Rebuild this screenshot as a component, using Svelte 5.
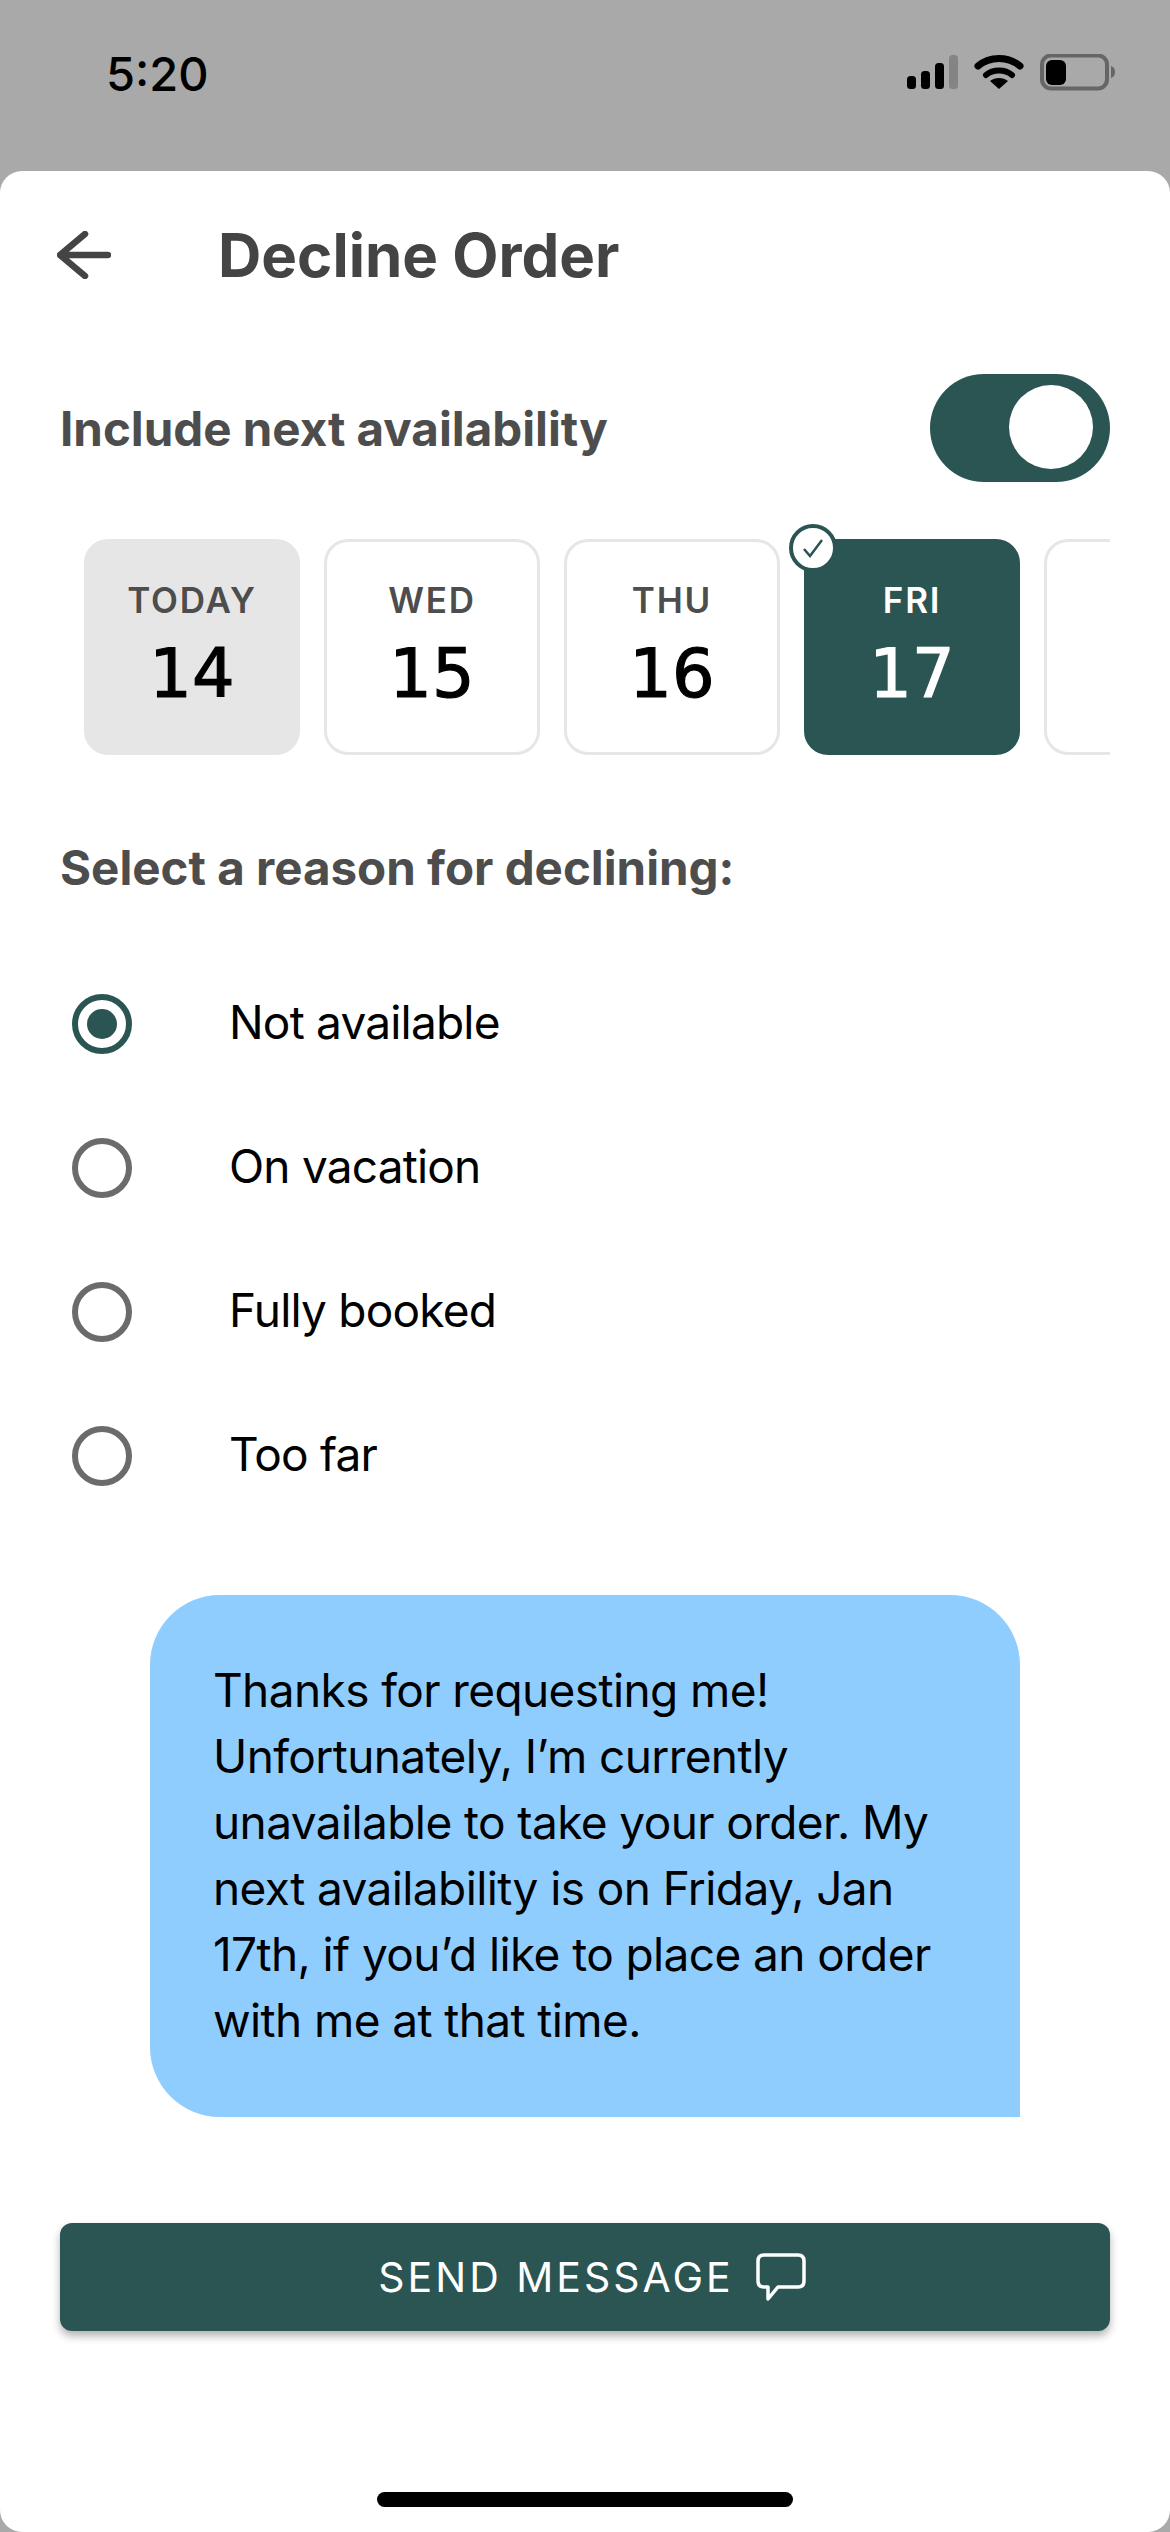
<script>
  const days = [
    { label: "TODAY", num: "14", kind: "today" },
    { label: "WED", num: "15", kind: "" },
    { label: "THU", num: "16", kind: "" },
    { label: "FRI", num: "17", kind: "picked" },
    // only the left edge of this card shows, its text is scrolled out of view
    { label: "", num: "", kind: "" }
  ];
  const reasons = ["Not available", "On vacation", "Fully booked", "Too far"];
  let selected = 0;
</script>

<div class="screen">
  <div class="status">
    <span class="time">5:20</span>
    <svg class="status-icons" width="208" height="38" viewBox="0 0 208 38">
      <!-- signal -->
      <rect x="0" y="22" width="9" height="13" rx="3.5" fill="#000" />
      <rect x="14" y="17" width="9" height="18" rx="3.5" fill="#000" />
      <rect x="28" y="9" width="9" height="26" rx="3.5" fill="#000" />
      <rect x="42" y="1" width="9" height="34" rx="3.5" fill="#848484" />
      <!-- wifi -->
      <path d="M71 12 C83 2 101 2 113 12" fill="none" stroke="#000" stroke-width="7" stroke-linecap="round" />
      <path d="M79 21 C86 15 98 15 105 21" fill="none" stroke="#000" stroke-width="6" stroke-linecap="round" />
      <path d="M92 35 L83 27 C88 23 96 23 101 27 Z" fill="#000" />
      <!-- battery -->
      <rect x="135" y="1.500" width="65" height="33" rx="9" fill="none" stroke="#666" stroke-width="4" />
      <rect x="139" y="6" width="20" height="25" rx="6" fill="#000" />
      <path d="M204 12 C207 13 208 15 208 18 C208 21 207 23 204 24 Z" fill="#666" />
    </svg>
  </div>

  <div class="sheet">
    <header class="top">
      <svg class="back" width="54" height="48" viewBox="0 0 54 48">
        <path d="M51 24 H4 M28 3 L3 24 L28 45" fill="none" stroke="#444" stroke-width="6.500" stroke-linecap="round" stroke-linejoin="round" />
      </svg>
      <h1>Decline Order</h1>
    </header>

    <div class="include">
      <span class="heading">Include next availability</span>
      <div class="toggle"><div class="knob"></div></div>
    </div>

    <div class="days">
      {#each days as day}
        <div class="day {day.kind}">
          {#if day.kind === "picked"}
            <div class="badge">
              <svg width="26" height="24" viewBox="0 0 26 24">
                <path d="M4 13 L10 20 L22 4" fill="none" stroke="#2a5552" stroke-width="2.500" />
              </svg>
            </div>
          {/if}
          {#if day.label}
            <span class="day-label">{day.label}</span>
            <span class="day-num">{day.num}</span>
          {/if}
        </div>
      {/each}
    </div>

    <div class="heading reason-title">Select a reason for declining:</div>

    <div class="reasons">
      {#each reasons as reason, i}
        <div class="reason">
          <div class="radio {i === selected ? 'on' : ''}"></div>
          <span>{reason}</span>
        </div>
      {/each}
    </div>

    <div class="bubble">
      Thanks for requesting me!<br />
      Unfortunately, I’m currently<br />
      unavailable to take your order. My<br />
      next availability is on Friday, Jan<br />
      17th, if you’d like to place an order<br />
      with me at that time.
    </div>

    <button type="button" class="send">
      <span>SEND MESSAGE</span>
      <svg width="50" height="48" viewBox="0 0 50 48">
        <path d="M8 2 H42 C46 2 48 4 48 8 V28 C48 32 46 34 42 34 H22 L12 46 V34 H8 C4 34 2 32 2 28 V8 C2 4 4 2 8 2 Z" fill="none" stroke="#fff" stroke-width="3.500" stroke-linejoin="round" />
      </svg>
    </button>

    <div class="home"></div>
  </div>
</div>

<style>
  :global(body) {
    margin: 0;
    background: #a9a9a9;
  }

  .screen {
    width: 1170px;
    height: 2532px;
    background: #a9a9a9;
    font-family: Inter, "Liberation Sans", sans-serif;
    overflow: hidden;
  }

  .status {
    height: 171px;
    box-sizing: border-box;
    padding: 54px 55px 0 106px;
    display: flex;
    justify-content: space-between;
    align-items: flex-start;
  }

  .time {
    font-size: 47px;
    line-height: 40px;
    font-weight: 500;
    color: #000;
  }

  .sheet {
    height: 2361px;
    box-sizing: border-box;
    background: #fff;
    border-radius: 22px;
    padding: 0 60px;
    display: flex;
    flex-direction: column;
  }

  .top {
    display: flex;
    align-items: center;
    margin-top: 60px;
    height: 48px;
  }

  .back {
    margin-left: -3px;
  }

  h1 {
    margin: 0 0 0 107px;
    font-size: 60px;
    font-weight: 700;
    color: #444;
  }

  .heading {
    font-size: 47.500px;
    line-height: 53px;
    font-weight: 700;
    color: #4d4d4d;
  }

  .include {
    display: flex;
    justify-content: space-between;
    align-items: center;
    margin-top: 95px;
  }

  .toggle {
    width: 180px;
    height: 108px;
    box-sizing: border-box;
    padding: 11px 17px;
    border-radius: 54px;
    background: #2a5552;
    display: flex;
    justify-content: flex-end;
  }

  .knob {
    width: 84px;
    height: 84px;
    border-radius: 50%;
    background: #fff;
  }

  .days {
    display: flex;
    gap: 24px;
    margin-top: 39px;
    padding: 18px 0 0 24px;
    overflow: hidden;
  }

  .day {
    position: relative;
    flex: 0 0 216px;
    height: 216px;
    box-sizing: border-box;
    border: 3px solid #e6e6e6;
    border-radius: 24px;
    display: flex;
    flex-direction: column;
    align-items: center;
    background: #fff;
  }

  .day.today {
    background: #e6e6e6;
  }

  .day.picked {
    background: #2a5552;
    border-color: #2a5552;
    color: #fff;
  }

  .badge {
    position: absolute;
    left: -18px;
    top: -18px;
    width: 48px;
    height: 48px;
    box-sizing: border-box;
    border: 4px solid #2a5552;
    border-radius: 50%;
    background: #fff;
    display: flex;
    align-items: center;
    justify-content: center;
  }

  .day-label {
    margin-top: 38px;
    font-size: 35px;
    line-height: 40px;
    letter-spacing: 1.800px;
    font-weight: 600;
    color: #4d4d4d;
  }

  .picked .day-label {
    color: #fff;
  }

  .day-num {
    margin-top: 14px;
    font-family: "DejaVu Sans", sans-serif;
    font-size: 67px;
    line-height: 80px;
    color: #000;
    -webkit-text-stroke: 1.2px currentColor;
  }

  .picked .day-num {
    color: #fff;
  }

  .reason-title {
    margin-top: 86px;
  }

  .reasons {
    margin-top: 56px;
    display: flex;
    flex-direction: column;
  }

  .reason {
    height: 144px;
    display: flex;
    align-items: center;
    font-size: 46px;
    letter-spacing: -0.8px;
    color: #000;
  }

  .radio {
    width: 60px;
    height: 60px;
    box-sizing: border-box;
    margin: 4px 97px 0 12px;
    border: 6px solid #6b6b6b;
    border-radius: 50%;
    display: flex;
    align-items: center;
    justify-content: center;
  }

  .radio.on {
    border-color: #2a5552;
  }

  .radio.on::after {
    content: "";
    width: 30px;
    height: 30px;
    border-radius: 50%;
    background: #2a5552;
  }

  .bubble {
    align-self: flex-start;
    width: 870px;
    height: 522px;
    box-sizing: border-box;
    margin: 69px 0 0 90px;
    padding: 62px 0 0 63px;
    background: #90cdff;
    border-radius: 70px 70px 0 70px;
    font-size: 46px;
    line-height: 66px;
    letter-spacing: -0.6px;
    color: #000;
  }

  .send {
    margin-top: 106px;
    height: 108px;
    border: 0;
    padding: 0 0 0 14px;
    border-radius: 12px;
    background: #2a5552;
    box-shadow: 0 5px 8px rgba(0, 0, 0, 0.3);
    color: #fff;
    font-family: inherit;
    font-size: 41px;
    letter-spacing: 3px;
    display: flex;
    align-items: center;
    justify-content: center;
    gap: 22px;
  }

  .home {
    align-self: center;
    margin-top: 161px;
    width: 416px;
    height: 15px;
    border-radius: 8px;
    background: #000;
  }
</style>
